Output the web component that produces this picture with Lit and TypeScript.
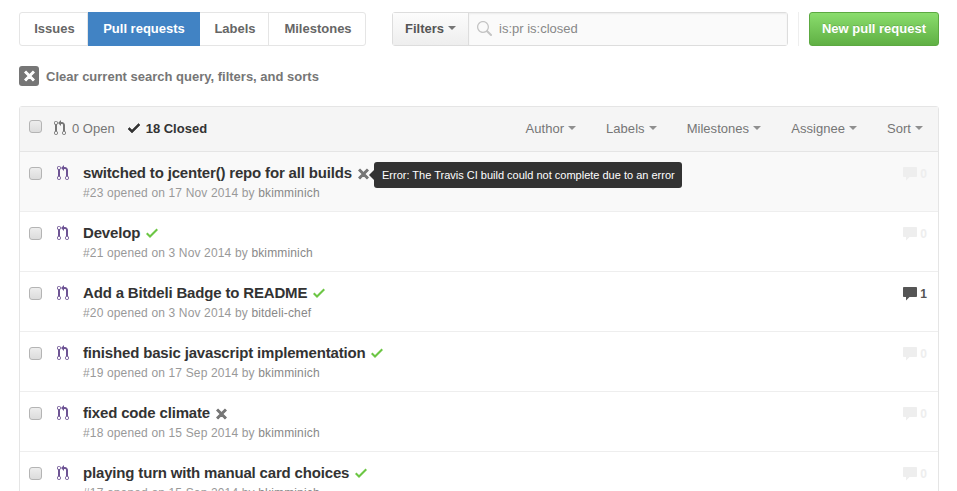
import { LitElement, html, css, svg } from "lit";
import { customElement } from "lit/decorators.js";

const prPath =
  "M11 11.28V5c-.03-.78-.34-1.47-.94-2.06C9.46 2.35 8.78 2.03 8 2H7V0L4 3l3 3V4h1c.27.02.48.11.69.31.21.2.3.42.31.69v6.28A1.993 1.993 0 0 0 10 15a1.993 1.993 0 0 0 1-3.72zm-1 2.92c-.66 0-1.2-.55-1.2-1.2 0-.65.55-1.2 1.2-1.2.65 0 1.2.55 1.2 1.2 0 .65-.55 1.2-1.2 1.2zM4 3c0-1.11-.89-2-2-2a1.993 1.993 0 0 0-1 3.72v6.56A1.993 1.993 0 0 0 2 15a1.993 1.993 0 0 0 1-3.72V4.72c.59-.34 1-.98 1-1.72zm-.8 10c0 .66-.55 1.2-1.2 1.2-.65 0-1.2-.55-1.2-1.2 0-.65.55-1.2 1.2-1.2.65 0 1.2.55 1.2 1.2zM2 4.2C1.34 4.2.8 3.65.8 3c0-.65.55-1.2 1.2-1.2.65 0 1.2.55 1.2 1.2 0 .65-.55 1.2-1.2 1.2z";
const checkPath = "M12 5l-8 8-4-4 1.5-1.5L4 10l6.5-6.5L12 5z";
const xPath =
  "M7.48 8l3.75 3.75-1.48 1.48L6 9.48l-3.75 3.75-1.48-1.48L4.52 8 .77 4.25l1.48-1.48L6 6.52l3.75-3.75 1.48 1.48L7.48 8z";
const commentPath =
  "M14 1H2c-.55 0-1 .45-1 1v8c0 .55.45 1 1 1h2v3.5L7.5 11H14c.55 0 1-.45 1-1V2c0-.55-.45-1-1-1z";
const searchPath =
  "M15.7 13.3l-3.81-3.83A5.93 5.93 0 0 0 13 6c0-3.31-2.69-6-6-6S1 2.69 1 6s2.69 6 6 6c1.3 0 2.48-.41 3.47-1.11l3.83 3.81c.19.2.45.3.7.3.25 0 .52-.09.7-.3a.996.996 0 0 0 0-1.41v.01zM7 10.7c-2.59 0-4.7-2.11-4.7-4.7 0-2.59 2.11-4.7 4.7-4.7 2.59 0 4.7 2.11 4.7 4.7 0 2.59-2.11 4.7-4.7 4.7z";

const icon = (d: string, w: number, h: number, vw: number, cls = "") =>
  html`<svg class=${cls} width=${w} height=${h} viewBox="0 0 ${vw} 16" fill="currentColor">${svg`<path d=${d} />`}</svg>`;

type Pr = {
  title: string;
  num: number;
  date: string;
  author: string;
  status: "ok" | "fail";
  comments: number;
};

const prs: Pr[] = [
  { title: "switched to jcenter() repo for all builds", num: 23, date: "17 Nov 2014", author: "bkimminich", status: "fail", comments: 0 },
  { title: "Develop", num: 21, date: "3 Nov 2014", author: "bkimminich", status: "ok", comments: 0 },
  { title: "Add a Bitdeli Badge to README", num: 20, date: "3 Nov 2014", author: "bitdeli-chef", status: "ok", comments: 1 },
  { title: "finished basic javascript implementation", num: 19, date: "17 Sep 2014", author: "bkimminich", status: "ok", comments: 0 },
  { title: "fixed code climate", num: 18, date: "15 Sep 2014", author: "bkimminich", status: "fail", comments: 0 },
  { title: "playing turn with manual card choices", num: 17, date: "15 Sep 2014", author: "bkimminich", status: "ok", comments: 0 },
];

const filters = ["Author", "Labels", "Milestones", "Assignee", "Sort"];

@customElement("app-root")
export class AppRoot extends LitElement {
  static styles = css`
    :host {
      display: block;
      height: 491px;
      overflow: hidden;
      background: #fff;
      font-family: "Liberation Sans", Arial, sans-serif;
      font-size: 13px;
      color: #333;
    }
    .page {
      padding: 12px 18px 0 19px;
    }
    .top {
      display: flex;
      height: 34px;
    }
    .tabs {
      display: flex;
      height: 34px;
      box-sizing: border-box;
      border: 1px solid #e5e5e5;
      border-radius: 3px;
      width: 347px;
    }
    .tab {
      display: flex;
      align-items: center;
      justify-content: center;
      box-sizing: border-box;
      padding: 0 0 2px 2px;
      font-weight: bold;
      color: #666;
      border-right: 1px solid #e5e5e5;
    }
    .tab:last-child {
      border-right: 0;
    }
    .tab.selected {
      background: #4183c4;
      color: #fff;
      margin: -1px 0;
      padding-left: 0;
      border-right: 0;
    }
    .filter-group {
      display: flex;
      width: 396px;
      margin-left: 26px;
      height: 34px;
      box-sizing: border-box;
      border: 1px solid #ddd;
      border-radius: 3px;
    }
    .filter-btn {
      width: 76px;
      box-sizing: border-box;
      padding-bottom: 2px;
      display: flex;
      align-items: center;
      justify-content: center;
      gap: 4px;
      font-weight: bold;
      color: #555;
      border-right: 1px solid #ddd;
      background: linear-gradient(#fcfcfc, #eee);
    }
    .search {
      flex: 1;
      display: flex;
      align-items: center;
      background: #fafafa;
      color: #888;
      padding-left: 7px;
      gap: 7px;
      box-shadow: inset 0 1px 2px rgba(0, 0, 0, 0.06);
    }
    .search span {
      padding-bottom: 2px;
    }
    .search svg {
      color: #c4c4c4;
    }
    .divider {
      width: 1px;
      background: #eee;
      margin-left: 10px;
    }
    .new-pr {
      margin-left: 10px;
      width: 130px;
      box-sizing: border-box;
      padding-bottom: 2px;
      display: flex;
      align-items: center;
      justify-content: center;
      color: #fff;
      font-weight: bold;
      text-shadow: 0 -1px 0 rgba(0, 0, 0, 0.15);
      background: linear-gradient(#8add6d, #60b044);
      border: 1px solid #5ca941;
      border-radius: 3px;
    }
    .caret {
      display: inline-block;
      width: 0;
      height: 0;
      border: 4px solid transparent;
      border-top-color: currentColor;
      border-bottom: 0;
      opacity: 0.8;
    }
    .clear {
      display: flex;
      align-items: center;
      height: 20px;
      margin-top: 20px;
      gap: 7px;
      font-weight: bold;
      color: #767676;
    }
    .clear-box {
      width: 20px;
      height: 20px;
      border-radius: 3px;
      background: #767676;
      color: #fff;
      display: flex;
      align-items: center;
      justify-content: center;
    }
    .fat {
      stroke: currentColor;
      stroke-width: 1.1;
    }
    .list {
      margin-top: 20px;
      border: 1px solid #e5e5e5;
      border-radius: 3px 3px 0 0;
    }
    .head {
      display: flex;
      align-items: center;
      height: 44px;
      background: #f5f5f5;
      border-bottom: 1px solid #e5e5e5;
      padding-left: 9px;
    }
    .head > .state,
    .menus {
      padding-bottom: 2px;
    }
    .cb {
      appearance: none;
      width: 13px;
      height: 13px;
      margin: 0;
      box-sizing: border-box;
      border: 1px solid #b4b4b4;
      border-radius: 3px;
      background: linear-gradient(#ededed, #dcdcdc);
      flex: none;
    }
    .head .cb {
      margin-top: -6px;
    }
    .state {
      display: flex;
      align-items: center;
      color: #767676;
    }
    .state.open {
      margin-left: 12px;
      gap: 6px;
    }
    .state.open svg {
      color: #767676;
    }
    .state.closed {
      margin-left: 13px;
      gap: 6px;
      color: #333;
      font-weight: bold;
    }
    .closed .fat {
      stroke-width: 0.6;
    }
    .menus {
      margin-left: auto;
      display: flex;
      gap: 30px;
      padding-right: 15px;
      color: #767676;
      letter-spacing: 0.04px;
    }
    .menu {
      display: flex;
      align-items: center;
      gap: 4px;
    }
    .row {
      position: relative;
      display: flex;
      height: 59px;
      border-bottom: 1px solid #eee;
      padding-left: 9px;
    }
    .row.hover {
      background: #f9f9f9;
    }
    .row .cb {
      margin-top: 15px;
    }
    .pr-icon {
      color: #6e5494;
      margin: 13px 0 0 15px;
      flex: none;
    }
    .body {
      margin-left: 14px;
      padding-top: 11px;
    }
    .title {
      display: flex;
      align-items: center;
      gap: 6px;
      font-size: 15px;
      font-weight: bold;
      line-height: 20px;
      letter-spacing: -0.17px;
      color: #333;
    }
    .ok {
      color: #6cc644;
    }
    .fail {
      color: #767676;
      margin-top: 1px;
    }
    .meta {
      font-size: 12px;
      line-height: 16px;
      margin-top: 2px;
      letter-spacing: 0.15px;
      color: #999;
    }
    .meta span {
      color: #888;
    }
    .comments {
      position: absolute;
      top: 14px;
      right: 11px;
      display: flex;
      align-items: center;
      gap: 2px;
      font-size: 12px;
      font-weight: bold;
      color: #eee;
    }
    .comments.has {
      color: #555;
    }
    .tooltip {
      position: absolute;
      left: 354px;
      top: 10px;
      height: 26px;
      box-sizing: border-box;
      padding: 0 7px 0 8px;
      display: flex;
      align-items: center;
      white-space: nowrap;
      background: #333;
      color: #fff;
      font-size: 11px;
      border-radius: 3px;
    }
    .tooltip::before {
      content: "";
      position: absolute;
      left: -5px;
      top: 8px;
      border: 5px solid transparent;
      border-left: 0;
      border-right-color: #333;
    }
  `;

  render() {
    const tabs = [
      ["Issues", 68, false],
      ["Pull requests", 112, true],
      ["Labels", 69, false],
      ["Milestones", 96, false],
    ] as const;
    return html`
      <div class="page">
        <div class="top">
          <div class="tabs">
            ${tabs.map(
              ([label, w, on]) =>
                html`<div class="tab ${on ? "selected" : ""}" style="width:${w}px">${label}</div>`
            )}
          </div>
          <div class="filter-group">
            <div class="filter-btn">Filters <span class="caret"></span></div>
            <div class="search">${icon(searchPath, 16, 16, 16)}<span>is:pr is:closed</span></div>
          </div>
          <div class="divider"></div>
          <div class="new-pr">New pull request</div>
        </div>
        <div class="clear">
          <div class="clear-box">${icon(xPath, 11, 16, 12, "fat")}</div>
          Clear current search query, filters, and sorts
        </div>
        <div class="list">
          <div class="head">
            <input class="cb" type="checkbox" />
            <div class="state open">${icon(prPath, 12, 16, 12)} 0 Open</div>
            <div class="state closed">${icon(checkPath, 12, 16, 12, "fat")} 18 Closed</div>
            <div class="menus">
              ${filters.map((f) => html`<div class="menu">${f} <span class="caret"></span></div>`)}
            </div>
          </div>
          ${prs.map(
            (p, i) => html`
              <div class="row ${i === 0 ? "hover" : ""}">
                <input class="cb" type="checkbox" />
                ${icon(prPath, 12, 16, 12, "pr-icon")}
                <div class="body">
                  <div class="title">
                    ${p.title}
                    ${p.status === "ok"
                      ? icon(checkPath, 12, 16, 12, "ok")
                      : icon(xPath, 11, 16, 12, "fail fat")}
                  </div>
                  <div class="meta">#${p.num} opened on ${p.date} by <span>${p.author}</span></div>
                </div>
                ${i === 0
                  ? html`<div class="tooltip">Error: The Travis CI build could not complete due to an error</div>`
                  : ""}
                <div class="comments ${p.comments ? "has" : ""}">
                  ${icon(commentPath, 16, 16, 16)} ${p.comments}
                </div>
              </div>
            `
          )}
        </div>
      </div>
    `;
  }
}
